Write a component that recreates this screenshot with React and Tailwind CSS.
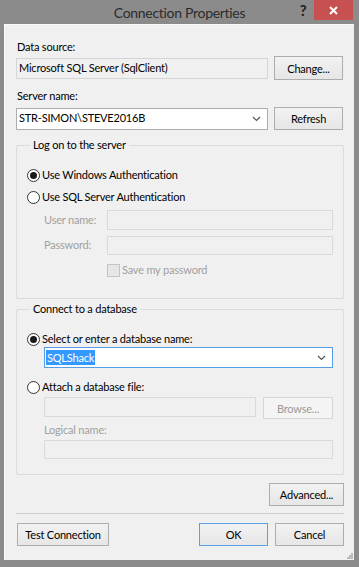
import React from "react";

const font = { fontFamily: 'Lato, "Noto Sans", sans-serif' };

function Button({ children, className = "", disabled, focused }) {
    return (
        <div
            className={`flex items-center justify-center border text-[11px] leading-none whitespace-nowrap ${
                disabled
                    ? "border-[#d5d5d5] bg-[#f4f4f4] text-[#9a9a9a]"
                    : focused
                    ? "border-[#5b9fe6] bg-gradient-to-b from-[#f2f2f2] to-[#e6e6e6] text-black"
                    : "border-[#adadad] bg-gradient-to-b from-[#f2f2f2] to-[#e6e6e6] text-black"
            } ${className}`}
        >
            {children}
        </div>
    );
}

function Chevron() {
    return (
        <svg width="9" height="6" viewBox="0 0 9 6" className="mr-[6px]">
            <path d="M1 1l3.5 3.5L8 1" fill="none" stroke="#555" strokeWidth="1.2" />
        </svg>
    );
}

function Radio({ checked, label }) {
    return (
        <div className="flex items-center h-[16px]">
            <div className="w-[13px] h-[13px] rounded-full border border-[#333] bg-white flex items-center justify-center">
                {checked && <div className="w-[7px] h-[7px] rounded-full bg-[#1a1a1a]" />}
            </div>
            <span className="ml-[2px] text-[11px] text-black whitespace-nowrap">{label}</span>
        </div>
    );
}

function Disabled({ className = "" }) {
    return <div className={`border border-[#dadada] bg-[#f0f0f0] ${className}`} />;
}

export default function App() {
    return (
        <div style={font} className="w-[359px] h-[567px] bg-[#8b8b8b] flex flex-col tracking-[-0.2px]">
            {/* Title bar */}
            <div className="h-[24px] flex items-start">
                <div className="w-[63px]" />
                <div className="flex-1 text-center text-[14px] tracking-[-0.3px] leading-[26px] text-[#2b2b2b]">
                    Connection Properties
                </div>
                <div className="w-[14px] mr-[4px] text-[15px] font-bold leading-[20px] text-[#1e1e1e] text-center">?</div>
                <div className="w-[39px] h-[20px] mr-[6px] bg-[#c75050] flex items-center justify-center">
                    <svg width="9" height="9" viewBox="0 0 9 9">
                        <path d="M1 1l7 7M8 1l-7 7" stroke="#fff" strokeWidth="2" />
                    </svg>
                </div>
            </div>

            {/* Client area */}
            <div className="relative ml-[4px] mr-[5px] h-[536px] bg-[#f0f0f0] border-t border-l border-[#fafafa] pl-[11px] pr-[10px] pt-[14px] flex flex-col">
                <div className="text-[11px] leading-[16px] text-black ml-[1px]">Data source:</div>
                <div className="mt-[1px] flex items-center h-[24px]">
                    <div className="w-[252px] h-[21px] border border-[#d5d5d5] bg-[#f0f0f0] flex items-center pl-[2px] text-[11px] text-black">
                        Microsoft SQL Server (SqlClient)
                    </div>
                    <Button className="ml-[6px] w-[69px] h-[24px]">Change...</Button>
                </div>

                <div className="mt-[8px] text-[11px] leading-[16px] text-black ml-[1px]">Server name:</div>
                <div className="mt-[3px] flex items-center h-[23px]">
                    <div className="w-[252px] h-[22px] border border-[#abadb3] bg-white flex items-center justify-between pl-[2px] text-[11px] text-black">
                        <span>STR-SIMON\STEVE2016B</span>
                        <Chevron />
                    </div>
                    <Button className="ml-[6px] w-[69px] h-[23px]">Refresh</Button>
                </div>

                {/* Log on group */}
                <fieldset className="mt-[7px] h-[162px] border border-[#dcdcdc] rounded-[2px] pl-[10px] pr-[10px]">
                    <legend className="ml-[3px] px-[3px] text-[11px] leading-[16px] text-black">Log on to the server</legend>
                    <div className="mt-[14px] flex flex-col">
                        <Radio checked label="Use Windows Authentication" />
                        <div className="mt-[6px]">
                            <Radio label="Use SQL Server Authentication" />
                        </div>
                        <div className="mt-[5px] flex items-center h-[20px] pl-[17px]">
                            <span className="w-[63px] text-[11px] text-[#a0a0a0] whitespace-nowrap">User name:</span>
                            <Disabled className="flex-1 h-[20px]" />
                        </div>
                        <div className="mt-[6px] flex items-center h-[19px] pl-[17px]">
                            <span className="w-[63px] text-[11px] text-[#a0a0a0] whitespace-nowrap">Password:</span>
                            <Disabled className="flex-1 h-[19px]" />
                        </div>
                        <div className="mt-[8px] flex items-center h-[14px] pl-[80px]">
                            <div className="w-[13px] h-[13px] border border-[#c4c4c4] bg-[#e6e6e6]" />
                            <span className="ml-[2px] text-[11px] text-[#a0a0a0]">Save my password</span>
                        </div>
                    </div>
                </fieldset>

                {/* Connect group */}
                <fieldset className="mt-[2px] h-[174px] border border-[#dcdcdc] rounded-[2px] pl-[10px] pr-[10px]">
                    <legend className="ml-[3px] px-[3px] text-[11px] leading-[16px] text-black">Connect to a database</legend>
                    <div className="mt-[14px] flex flex-col">
                        <Radio checked label="Select or enter a database name:" />
                        <div className="ml-[17px] mt-[0px] h-[21px] border border-[#569de5] bg-white flex items-center justify-between pl-[1px] text-[11px]">
                            <span className="bg-[#3399ff] text-white leading-[15px] px-[1px]">SQLShack</span>
                            <Chevron />
                        </div>
                        <div className="mt-[11px]">
                            <Radio label="Attach a database file:" />
                        </div>
                        <div className="mt-[2px] ml-[17px] flex items-start">
                            <Disabled className="w-[212px] h-[20px]" />
                            <Button disabled className="ml-[7px] flex-1 h-[22px]">Browse...</Button>
                        </div>
                        <div className="ml-[17px] mt-[3px] text-[11px] leading-[16px] text-[#a0a0a0]">Logical name:</div>
                        <Disabled className="ml-[17px] mt-[2px] h-[19px]" />
                    </div>
                </fieldset>

                <div className="mt-[8px] flex justify-end">
                    <Button className="w-[75px] h-[23px]">Advanced...</Button>
                </div>
                <div className="mt-[7px] h-px bg-[#d0d0d0]" />
                <div className="mt-[9px] flex items-center">
                    <Button className="ml-[1px] w-[92px] h-[23px]">Test Connection</Button>
                    <div className="flex-1" />
                    <Button focused className="w-[69px] h-[23px]">OK</Button>
                    <Button className="ml-[7px] w-[69px] h-[23px]">Cancel</Button>
                </div>

                {/* resize grip */}
                <svg width="6" height="6" viewBox="0 0 6 6" className="absolute right-[1px] bottom-[1px]">
                    <rect x="4" y="0" width="2" height="2" fill="#bdbdbd" />
                    <rect x="2" y="2" width="2" height="2" fill="#bdbdbd" />
                    <rect x="4" y="2" width="2" height="2" fill="#bdbdbd" />
                    <rect x="0" y="4" width="2" height="2" fill="#bdbdbd" />
                    <rect x="2" y="4" width="2" height="2" fill="#bdbdbd" />
                    <rect x="4" y="4" width="2" height="2" fill="#bdbdbd" />
                </svg>
            </div>
        </div>
    );
}
